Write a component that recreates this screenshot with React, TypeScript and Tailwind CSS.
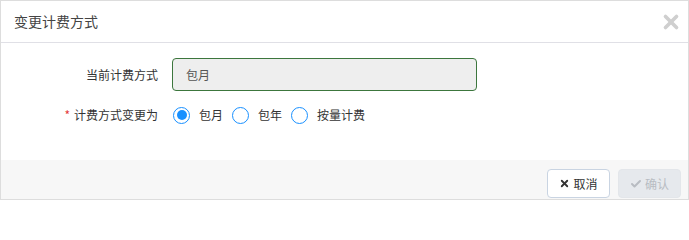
import { Check, X } from "lucide-react";

const options = ["包月", "包年", "按量计费"];

function Radio({ checked, label }: { checked?: boolean; label: string }) {
  return (
    <label className="flex items-center gap-[9px]">
      <span className="flex h-[17px] w-[17px] items-center justify-center rounded-full border-[1.5px] border-[#1890ff] bg-white">
        {checked && <span className="h-[10px] w-[10px] rounded-full bg-[#1890ff]" />}
      </span>
      <span className="text-[12px] text-[#333]">{label}</span>
    </label>
  );
}

export default function App() {
  return (
    <div
      className="h-[200px] w-[689px] overflow-hidden border border-[#ddd] bg-white flex flex-col"
      style={{ fontFamily: '"Noto Sans CJK SC", "Noto Sans", sans-serif' }}
    >
      <div className="flex h-[42px] shrink-0 items-center justify-between border-b border-[#e0e0e6] pl-[13px] pr-[6px]">
        <h3 className="text-[14px] text-[#444]">变更计费方式</h3>
        <X className="h-[22px] w-[22px] text-[#cfcfcf]" strokeWidth={4} />
      </div>
      <div className="h-[117px] shrink-0 pt-[15px]">
        <div className="flex items-center">
          <div className="w-[157px] text-right text-[12px] text-[#333]">当前计费方式</div>
          <div className="ml-[14px] flex h-[33px] w-[305px] items-center rounded-[4px] border border-[#3c763d] bg-[#eee] px-[13px] text-[12px] text-[#555]">
            包月
          </div>
        </div>
        <div className="mt-[9px] flex h-[30px] items-center">
          <div className="w-[157px] text-right text-[12px] text-[#333]">
            <span className="mr-[4px] text-[#e4393c]">*</span>计费方式变更为
          </div>
          <div className="ml-[15px] flex items-center gap-[9px]">
            {options.map((o, i) => (
              <Radio key={o} label={o} checked={i === 0} />
            ))}
          </div>
        </div>
      </div>
      <div className="flex flex-1 items-start justify-end gap-[8px] bg-[#f7f7f7] pr-[7px] pt-[9px]">
        <button className="flex h-[29px] w-[63px] items-center justify-center gap-[3px] rounded-[4px] border border-[#c9d4e2] bg-white text-[12px] text-[#333]">
          <X className="h-[11px] w-[11px] text-[#333]" strokeWidth={4} />
          取消
        </button>
        <button className="flex h-[29px] w-[63px] items-center justify-center gap-[3px] rounded-[4px] border border-[#e3e6ea] bg-[#e6e9ed] text-[12px] text-[#b8bcc2]">
          <Check className="h-[12px] w-[12px] text-[#b8bcc2]" strokeWidth={4} />
          确认
        </button>
      </div>
    </div>
  );
}
